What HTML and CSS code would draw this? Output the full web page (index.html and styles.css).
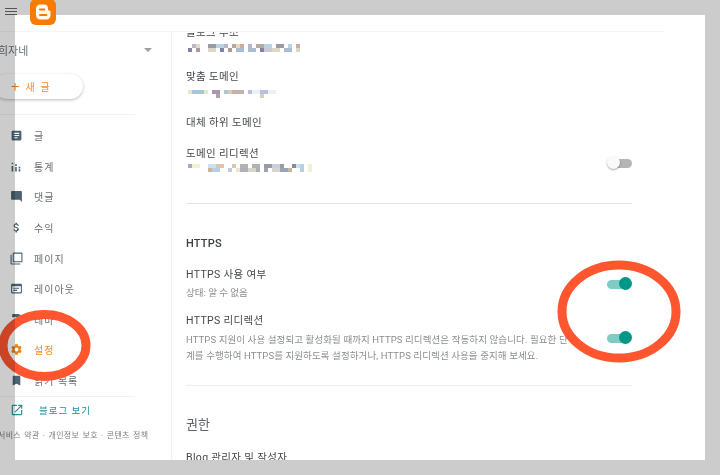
FILE: index.html
```html
<!DOCTYPE html>
<html lang="ko">
<head>
<meta charset="utf-8">
<title>설정</title>
<link rel="stylesheet" href="styles.css">
</head>
<body>
<div class="app">
  <div class="topline"></div>
  <div class="columns">
    <aside class="sidebar">
      <div class="blogname"><span>희자네</span><i class="caret"></i></div>
      <div class="newpost"><span class="plus">+</span><span>새 글</span></div>
      <nav class="nav">
        <a class="item"><svg class="ico" viewBox="0 0 24 24"><path d="M19 3H5c-1.1 0-2 .9-2 2v14c0 1.1.9 2 2 2h14c1.1 0 2-.9 2-2V5c0-1.1-.9-2-2-2zm-5 14H7v-2h7v2zm3-4H7v-2h10v2zm0-4H7V7h10v2z"/></svg><span>글</span></a>
        <a class="item"><svg class="ico" viewBox="0 0 24 24"><path d="M3 11h3v10H3zM3 5h3v3H3zM9.500 13h3v8h-3zM9.500 8h3v3h-3zM16 17h3v4h-3zM16 12.500h3v3h-3z"/></svg><span>통계</span></a>
        <a class="item"><svg class="ico" viewBox="0 0 24 24"><path d="M21.990 4c0-1.100-.89-2-1.990-2H4c-1.100 0-2 .9-2 2v12c0 1.100.9 2 2 2h14l4 4-.01-18z"/></svg><span>댓글</span></a>
        <a class="item"><svg class="ico" viewBox="0 0 24 24"><path d="M11.800 10.900c-2.270-.59-3-1.200-3-2.150 0-1.090 1.010-1.850 2.700-1.850 1.780 0 2.440.85 2.500 2.100h2.210c-.07-1.720-1.120-3.300-3.210-3.810V3h-3v2.160c-1.940.42-3.500 1.680-3.500 3.610 0 2.310 1.910 3.460 4.700 4.130 2.500.6 3 1.480 3 2.410 0 .69-.49 1.790-2.700 1.790-2.060 0-2.870-.92-2.980-2.100h-2.200c.12 2.190 1.760 3.420 3.680 3.830V21h3v-2.150c1.950-.37 3.500-1.500 3.500-3.550 0-2.840-2.430-3.810-4.700-4.400z"/></svg><span>수익</span></a>
        <a class="item"><svg class="ico" viewBox="0 0 24 24"><path d="M3 5H1v16c0 1.100.9 2 2 2h16v-2H3V5zm18-4H7c-1.100 0-2 .9-2 2v14c0 1.100.9 2 2 2h14c1.100 0 2-.9 2-2V3c0-1.100-.9-2-2-2zm0 16H7V3h14v14z"/></svg><span>페이지</span></a>
        <a class="item"><svg class="ico" viewBox="0 0 24 24"><path d="M20 3H4c-1.100 0-2 .9-2 2v14c0 1.100.9 2 2 2h16c1.100 0 2-.9 2-2V5c0-1.100-.9-2-2-2zm0 16H4V8h16v11zM6 10.500h11v2H6zM6 14.500h7v2H6z"/></svg><span>레이아웃</span></a>
        <a class="item"><svg class="ico" viewBox="0 0 24 24"><path d="M18 4V3c0-.55-.45-1-1-1H5c-.55 0-1 .45-1 1v4c0 .55.45 1 1 1h12c.55 0 1-.45 1-1V6h1v4H9v11c0 .55.45 1 1 1h2c.55 0 1-.45 1-1v-9h8V4h-3z"/></svg><span>테마</span></a>
        <a class="item active"><svg class="ico" viewBox="0 0 24 24"><path d="M19.140 12.940c.04-.3.06-.61.06-.94 0-.32-.02-.64-.07-.94l2.030-1.580c.18-.14.23-.41.12-.61l-1.920-3.320c-.12-.22-.37-.29-.59-.22l-2.390.96c-.5-.38-1.030-.7-1.620-.94l-.36-2.540c-.04-.24-.24-.41-.48-.41h-3.840c-.24 0-.43.17-.47.41l-.36 2.540c-.59.24-1.130.57-1.620.94l-2.390-.96c-.22-.08-.47 0-.59.22L2.740 8.870c-.12.21-.08.47.12.61l2.030 1.580c-.05.3-.09.63-.09.94s.02.64.07.94l-2.030 1.580c-.18.14-.23.41-.12.61l1.920 3.320c.12.22.37.29.59.22l2.390-.96c.5.38 1.030.7 1.620.94l.36 2.540c.05.24.24.41.48.41h3.840c.24 0 .44-.17.47-.41l.36-2.540c.59-.24 1.130-.56 1.620-.94l2.390.96c.22.08.47 0 .59-.22l1.920-3.320c.12-.22.07-.47-.12-.61l-2.010-1.580zM12 15.600c-1.980 0-3.600-1.620-3.600-3.600s1.620-3.600 3.600-3.600 3.600 1.620 3.600 3.600-1.620 3.600-3.600 3.600z"/></svg><span>설정</span></a>
        <a class="item"><svg class="ico" viewBox="0 0 24 24"><path d="M17 3H7c-1.100 0-1.990.9-1.990 2L5 21l7-3 7 3V5c0-1.100-.9-2-2-2z"/></svg><span>읽기 목록</span></a>
      </nav>
      <a class="viewblog"><svg class="ico teal" viewBox="0 0 24 24"><path d="M19 19H5V5h7V3H5c-1.110 0-2 .9-2 2v14c0 1.100.89 2 2 2h14c1.100 0 2-.9 2-2v-7h-2v7zM14 3v2h3.590l-9.830 9.830 1.410 1.410L19 6.410V10h2V3h-7z"/></svg><span>블로그 보기</span></a>
      <div class="legal">서비스 약관 · 개인정보 보호 · 콘텐츠 정책</div>
    </aside>
    <main class="main">
      <div class="inner">
        <div class="label cut">블로그 주소</div>
        <svg class="mosaic m1" viewBox="0 0 112 8">
          <path fill="#b9b6cc" d="M4 0h4v4H4zM36 0h4v4h-4zM60 0h4v4h-4z"/><path fill="#e9d9c4" d="M8 0h4v4H8zM48 0h4v4h-4z"/><path fill="#9a9aa6" d="M20 0h8v4h-8zM88 0h8v4h-8z"/><path fill="#bcd3e4" d="M28 0h8v4h-8zM76 0h8v4h-8zM100 0h4v4h-4z"/><path fill="#b3aaa0" d="M68 0h8v4h-8zM44 0h4v4h-4z"/><path fill="#c8b09c" d="M52 0h4v4h-4zM108 0h4v4h-4z"/>
          <path fill="#7f84a8" d="M0 4h4v4H0zM32 4h4v4h-4zM72 4h4v4h-4z"/><path fill="#b09a96" d="M8 4h4v4H8zM40 4h4v4h-4z"/><path fill="#dcd6c6" d="M20 4h8v4h-8zM84 4h8v4h-8zM108 4h4v4h-4z"/><path fill="#a9bcd6" d="M48 4h8v4h-8zM60 4h8v4h-8zM96 4h8v4h-8z"/><path fill="#c9cbd0" d="M76 4h8v4h-8z"/>
        </svg>
        <div class="label l2">맞춤 도메인</div>
        <svg class="mosaic m2" viewBox="0 0 88 10">
          <path fill="#e7e6c6" d="M0 2h4v4H0zM16 2h4v4h-4z"/><path fill="#a6c6dc" d="M4 2h12v4H4zM36 2h8v4h-8z"/><path fill="#a898ae" d="M24 2h8v4h-8z"/><path fill="#bba09a" d="M28 6h4v4h-4z"/><path fill="#e6c9a8" d="M40 2h4v4h-4z"/><path fill="#c3b1b1" d="M44 2h12v4H44z"/><path fill="#b8c0dc" d="M60 2h4v4h-4zM72 2h8v4h-8z"/><path fill="#e0d0a8" d="M72 6h4v4h-4z"/><path fill="#e8f2f6" d="M64 2h8v4h-8zM80 2h8v4h-8z"/>
        </svg>
        <div class="label l3">대체 하위 도메인</div>
        <div class="row r4">
          <div>
            <div class="label">도메인 리디렉션</div>
            <svg class="mosaic m3" viewBox="0 0 124 8">
              <path fill="#aaa7c6" d="M0 0h4v4H0z"/><path fill="#f3f0d2" d="M4 0h8v4H4zM120 0h4v8h-4z"/><path fill="#cde0ec" d="M20 0h8v4h-8zM108 0h4v4h-4z"/><path fill="#dcc6b0" d="M28 0h8v4h-8zM44 0h4v4h-4z"/><path fill="#aeb6ae" d="M52 0h8v4h-8zM64 0h8v4h-8z"/><path fill="#9a9aa6" d="M76 0h8v4h-8zM92 0h4v4h-4z"/><path fill="#c8cfe0" d="M84 0h8v4h-8z"/><path fill="#888a98" d="M104 0h4v4h-4z"/>
              <path fill="#c9b49e" d="M20 4h4v4h-4zM100 4h4v4h-4z"/><path fill="#b9cfe8" d="M24 4h8v4h-8zM40 4h4v4h-4zM112 0h4v8h-4z"/><path fill="#efe2d2" d="M48 4h4v4h-4z"/><path fill="#b0aeb8" d="M52 4h8v4h-8zM68 4h4v4h-4z"/><path fill="#d6d4cc" d="M60 4h8v4h-8zM84 4h8v4h-8z"/><path fill="#99a6b2" d="M76 4h4v4h-4zM92 4h8v4h-8z"/>
            </svg>
          </div>
          <i class="toggle off"></i>
        </div>
        <hr class="rule r5">
        <h2 class="section">HTTPS</h2>
        <div class="row r6">
          <div>
            <div class="label">HTTPS 사용 여부</div>
            <div class="sub s1">상태: 알 수 없음</div>
          </div>
          <i class="toggle on"></i>
        </div>
        <div class="row r7">
          <div>
            <div class="label">HTTPS 리디렉션</div>
            <div class="sub s2">HTTPS 지원이 사용 설정되고 활성화될 때까지 HTTPS 리디렉션은 작동하지 않습니다. 필요한 단<br>계를 수행하여 HTTPS를 지원하도록 설정하거나, HTTPS 리디렉션 사용을 중지해 보세요.</div>
          </div>
          <i class="toggle on t2"></i>
        </div>
        <hr class="rule r8">
        <h2 class="perm">권한</h2>
        <div class="label l9">Blog 관리자 및 작성자</div>
      </div>
    </main>
  </div>
</div>
<svg class="ovals" viewBox="0 0 720 475">
  <ellipse cx="44.500" cy="345.500" rx="41.500" ry="31"/>
  <ellipse cx="619" cy="311.500" rx="57" ry="46.500"/>
</svg>
<div class="band"></div>
<div class="menu"><i></i><i></i><i></i></div>
<svg class="logo" viewBox="0 0 26 26">
  <rect width="26" height="26" x="0" y="0" rx="6" fill="#f57c00"/>
  <path fill="#fff8ef" d="M10 5.500h4.500c2.400 0 3.500 1.600 3.500 3.500v1.500c0 .8.600 1 1.200 1 .6 0 1.300.4 1.300 1.300v3.700c0 2.200-1.800 4-4 4H10c-2.200 0-4-1.800-4-4V9.500c0-2.200 1.800-4 4-4z"/>
  <path fill="#f57c00" d="M10 9.500h4.300a1 1 0 0 1 0 2H10a1 1 0 0 1 0-2zM10 15h6.500a1 1 0 0 1 0 2H10a1 1 0 0 1 0-2z"/>
</svg>
</body>
</html>
```
FILE: styles.css
```css
* { box-sizing: border-box; }
html, body { margin: 0; padding: 0; }
body {
  width: 720px;
  height: 475px;
  overflow: hidden;
  position: relative;
  background: #ccc;
  font-family: Roboto, "Noto Sans CJK KR", sans-serif;
  color: #3c4043;
}
.app {
  margin: 15px 15px 0 0;
  height: 445px;
  width: 705px;
  background: #fff;
  overflow: hidden;
  display: flex;
  flex-direction: column;
}
.topline {
  flex: none;
  height: 17px;
  width: 665px;
  border-bottom: 1px solid #f6f6f6;
}
.columns { flex: 1; display: flex; min-height: 0; filter: blur(.3px); }
.sidebar {
  flex: none;
  width: 172px;
  border-right: 1px solid #f1f1f1;
  display: flex;
  flex-direction: column;
}
.blogname {
  display: flex;
  justify-content: space-between;
  align-items: center;
  height: 20px;
  margin-top: 8px;
  padding-right: 19px;
  font-size: 11px;
  color: #6b6f73;
}
.blogname span { margin-left: -2px; }
.caret {
  width: 0; height: 0;
  border-left: 4px solid transparent;
  border-right: 4px solid transparent;
  border-top: 4px solid #9e9e9e;
}
.newpost {
  margin: 14px 0 0 -6px;
  width: 89px;
  height: 25px;
  border-radius: 13px;
  background: #fff;
  box-shadow: 0 1px 3px rgba(60,64,67,.35);
  display: flex;
  align-items: center;
  padding-left: 17px;
  gap: 6px;
  font-size: 10px;
  letter-spacing: 1.700px;
  color: #f58a1f;
}
.plus { font-size: 15px; font-weight: 300; letter-spacing: 0; line-height: 1; color: #f57c00; }
.nav {
  margin-top: 15px;
  padding-top: 5.500px;
  width: 135px;
  border-top: 1px solid #f1f1f1;
}
.item {
  display: flex;
  align-items: center;
  height: 30.600px;
  padding-left: 10px;
  gap: 11px;
  font-size: 10px;
  letter-spacing: 1px;
  color: #6a6e72;
  white-space: nowrap;
}
.ico { width: 13px; height: 13px; flex: none; fill: #4a6272; }
.active { color: #f58a1f; }
.active .ico { fill: #ef7f06; }
.viewblog {
  margin-top: 0;
  width: 135px;
  border-top: 1px solid #f1f1f1;
  height: 28px;
  display: flex;
  align-items: center;
  padding-left: 10px;
  gap: 15px;
  font-size: 9.500px;
  letter-spacing: 1px;
  color: #26909c;
  white-space: nowrap;
}
.ico.teal { width: 14px; height: 14px; fill: #26909c; }
.legal {
  margin: 5px 0 0 -2px;
  font-size: 8px;
  letter-spacing: .3px;
  word-spacing: 1px;
  color: #7c7f83;
  white-space: nowrap;
}
.main { flex: 1; min-width: 0; overflow: hidden; }
.inner { width: 460px; margin: -6px 0 0 14px; }
.label { font-size: 10.500px; line-height: 14px; color: #44484c; white-space: nowrap; letter-spacing: .35px; }
.mosaic { display: block; }
.m1 { width: 112px; height: 8px; margin: 4px 0 0 2px; }
.l2 { margin-top: 18px; }
.m2 { width: 88px; height: 10px; margin: 4px 0 0 2px; }
.l3 { margin-top: 18px; }
.row { display: flex; justify-content: space-between; align-items: flex-start; width: 446px; }
.r4 { margin-top: 17px; }
.m3 { width: 124px; height: 8px; margin: 3px 0 0 2px; }
.toggle { display: block; width: 25px; height: 14px; flex: none; position: relative; }
.toggle::before {
  content: "";
  position: absolute;
  left: 3px; right: 0; top: 2.500px;
  height: 9px;
  border-radius: 5px;
}
.toggle::after {
  content: "";
  position: absolute;
  top: 0;
  width: 13px; height: 13px;
  border-radius: 50%;
}
.off { margin-top: 9px; }
.off::before { background: #b5b5b5; }
.off::after { left: 0; background: #fafafa; box-shadow: 0 1px 2px rgba(0,0,0,.35); }
.on { margin-top: 9px; }
.on::before { left: 0; right: 2px; background: #80cbc4; }
.on::after { right: 0; background: #009688; }
.t2 { margin-top: 17px; }
.rule { border: 0; border-top: 1px solid #e3e3e3; margin: 0; width: 446px; }
.r5 { margin-top: 31px; }
.section { margin: 33px 0 0; font-size: 11px; line-height: 14px; font-weight: 500; color: #3c4043; letter-spacing: .2px; }
.r6 { margin-top: 17px; }
.sub { font-size: 9.500px; color: #8a8d90; white-space: nowrap; }
.s1 { margin-top: 4px; line-height: 14px; }
.r7 { margin-top: 14px; }
.s2 { margin-top: 4px; line-height: 16px; letter-spacing: .1px; }
.r8 { margin-top: 21px; border-color: #eeeeee; }
.perm { margin: 31px 0 0; font-size: 13px; line-height: 16px; font-weight: 400; color: #5f6368; }
.l9 { margin-top: 18px; }
.ovals {
  position: absolute;
  left: 0; top: 0;
  width: 720px; height: 475px;
  fill: none;
  stroke: #ff5630;
  stroke-width: 9;
  filter: blur(.3px);
}
.band {
  position: absolute;
  left: 0; top: 15px;
  width: 15px; height: 445px;
  background: rgba(0,0,0,.2);
}
.menu {
  position: absolute;
  left: 5px; top: 8px;
  width: 12px;
  display: flex;
  flex-direction: column;
  gap: 2px;
}
.menu i { display: block; height: 1px; background: #555; }
.logo { position: absolute; left: 30px; top: -1px; width: 26px; height: 26px; }
```
